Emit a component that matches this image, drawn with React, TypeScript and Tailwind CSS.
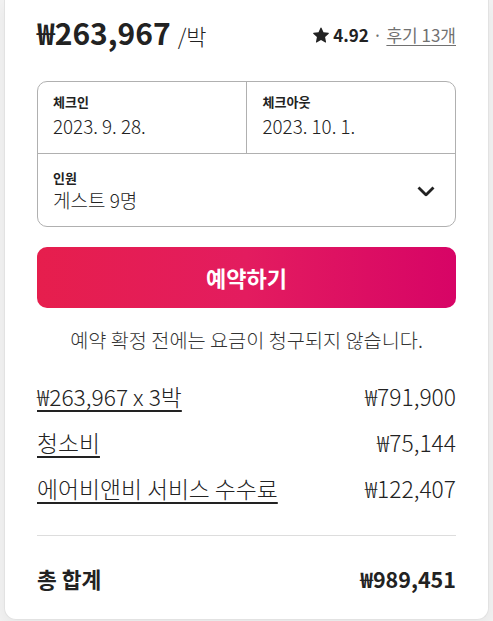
import React from "react";

function Star() {
  return (
    <svg viewBox="0 0 32 32" className="w-[16px] h-[16px]" fill="#222">
      <path d="M15.1 1.58l-4.13 8.88-9.86 1.27a1 1 0 0 0-.54 1.74l7.3 6.57-1.97 9.85a1 1 0 0 0 1.48 1.06l8.62-5 8.63 5a1 1 0 0 0 1.48-1.06l-1.97-9.85 7.3-6.57a1 1 0 0 0-.55-1.73l-9.86-1.28-4.12-8.88a1 1 0 0 0-1.82 0z" />
    </svg>
  );
}

function Chevron() {
  return (
    <svg viewBox="0 0 32 32" className="w-[20px] h-[20px]" fill="none" stroke="#222" strokeWidth={4.5}>
      <path d="M28 12 16.7 23.3a1 1 0 0 1-1.4 0L4 12" />
    </svg>
  );
}

export default function App() {
  const font = { fontFamily: '"Noto Sans CJK KR", "Noto Sans", sans-serif' };
  return (
    <div className="min-h-[621px] bg-[#f2f2f2] pl-[4px]" style={font}>
      <div className="w-[485px] bg-white rounded-b-[12px] border-x border-b border-[#e2e2e2] shadow-[0_6px_16px_rgba(0,0,0,0.05)] px-[32px] pt-[12px] pb-[28px] text-[#222]">
        <div className="flex items-center justify-between h-[40px]">
          <div className="flex items-baseline gap-[7px]">
            <span className="text-[30px] font-semibold leading-[40px]">₩263,967</span>
            <span className="text-[22px] font-light leading-[28px] text-[#222]">/박</span>
          </div>
          <div className="flex items-center gap-[4px] text-[17px] mt-[5px]">
            <Star />
            <span className="font-semibold">4.92</span>
            <span className="text-[#717171]">·</span>
            <span className="text-[#717171] underline underline-offset-[3px]">후기 13개</span>
          </div>
        </div>

        <div className="mt-[29px] border border-[#b0b0b0] rounded-[10px] flex flex-col">
          <div className="flex h-[72px] border-b border-[#b0b0b0]">
            <div className="flex-1 border-r border-[#b0b0b0] pl-[15px] pt-[12px]">
              <div className="text-[13px] font-bold leading-[16px]">체크인</div>
              <div className="text-[18.8px] font-light leading-[22px] mt-[5px]">2023. 9. 28.</div>
            </div>
            <div className="flex-1 pl-[16px] pt-[12px]">
              <div className="text-[13px] font-bold leading-[16px]">체크아웃</div>
              <div className="text-[18.8px] font-light leading-[22px] mt-[5px]">2023. 10. 1.</div>
            </div>
          </div>
          <div className="h-[72px] flex items-center justify-between pl-[15px] pr-[19px]">
            <div className="pt-[1px]">
              <div className="text-[13px] font-bold leading-[16px]">인원</div>
              <div className="text-[19px] font-light leading-[22px] mt-[3px]">게스트 9명</div>
            </div>
            <Chevron />
          </div>
        </div>

        <button className="mt-[20px] w-full h-[61px] rounded-[10px] bg-[linear-gradient(to_right,#e61e4d_0%,#e31c5f_50%,#d70466_100%)] text-white text-[22px] font-bold">
          예약하기
        </button>

        <div className="mt-[20px] text-center text-[19.7px] font-light leading-[24px] text-[#333]">예약 확정 전에는 요금이 청구되지 않습니다.</div>

        <div className="mt-[33px] flex flex-col gap-[22px] text-[22.8px] font-light text-[#222] leading-[24px]">
          <div className="flex justify-between">
            <span className="underline underline-offset-[4px]">₩263,967 x 3박</span>
            <span>₩791,900</span>
          </div>
          <div className="flex justify-between">
            <span className="underline underline-offset-[4px]">청소비</span>
            <span>₩75,144</span>
          </div>
          <div className="flex justify-between">
            <span className="underline underline-offset-[4px]">에어비앤비 서비스 수수료</span>
            <span>₩122,407</span>
          </div>
        </div>

        <div className="mt-[34px] border-t border-[#dddddd]" />

        <div className="mt-[31px] flex justify-between text-[21.5px] leading-[24px] font-bold">
          <span>총 합계</span>
          <span>₩989,451</span>
        </div>
      </div>
    </div>
  );
}
